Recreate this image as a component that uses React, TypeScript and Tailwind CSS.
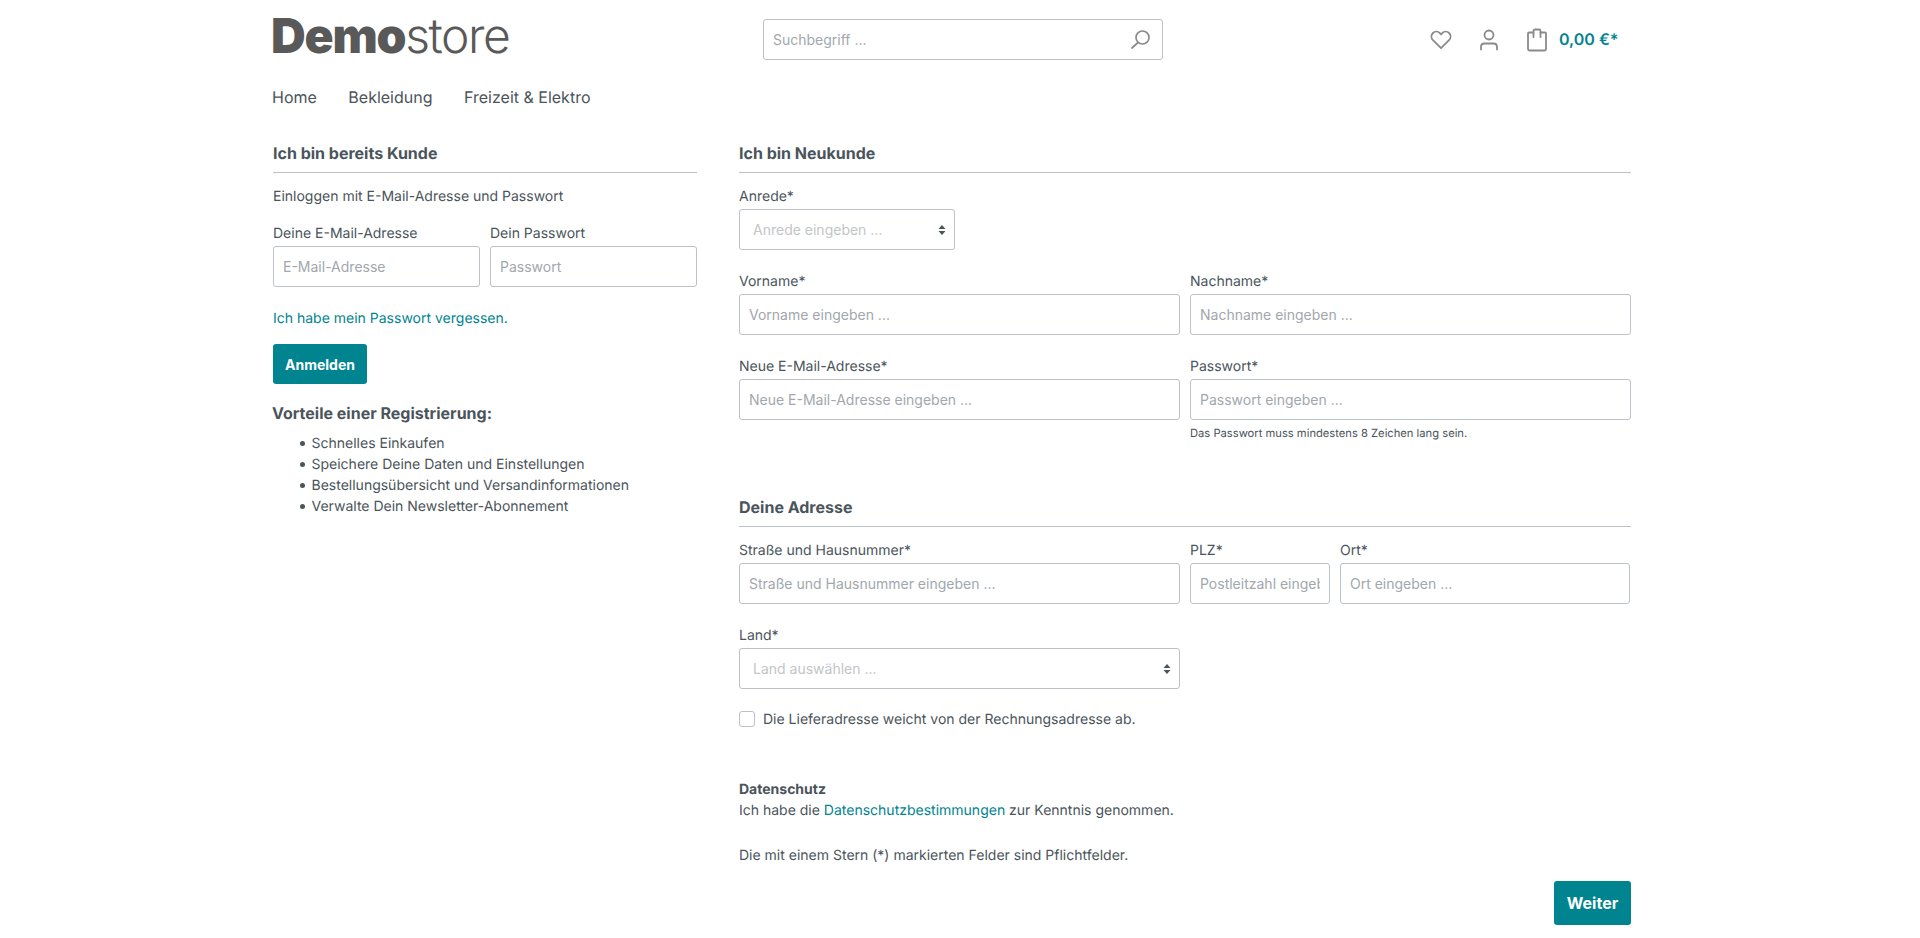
import React from "react";

const inputClass =
  "block w-full h-[41px] px-[9px] bg-white border border-[#bcc1c7] rounded-[3px] text-sm text-[#4a545b] placeholder:text-[#a2a7ad] outline-none";

const Field = ({ label, placeholder, className = "" }: { label: string; placeholder: string; className?: string }) => (
  <div className={className}>
    <label className="block mb-[2px] text-sm leading-[21px]">{label}</label>
    <input className={inputClass} placeholder={placeholder} />
  </div>
);

const SelectField = ({ label, placeholder, className = "" }: { label: string; placeholder: string; className?: string }) => (
  <div className={className}>
    <label className="block mb-[2px] text-sm leading-[21px]">{label}</label>
    <div className="relative">
      <select
        defaultValue=""
        className="block w-full h-[41px] pl-[13px] pr-6 appearance-none bg-white border border-[#bcc1c7] rounded-[3px] text-sm text-[#c3c5c8] outline-none"
      >
        <option value="" disabled>
          {placeholder}
        </option>
      </select>
      <svg className="absolute right-[9px] top-[15px] pointer-events-none" width="8" height="12" viewBox="0 0 8 12" fill="#4a545b">
        <path d="M4 1 7.5 5H.5zM4 11 .5 7h7z" />
      </svg>
    </div>
  </div>
);

const Heading = ({ children }: { children: React.ReactNode }) => (
  <h2 className="pb-[7px] border-b border-[#bcc1c7] text-base leading-6 font-bold">{children}</h2>
);

const benefits = [
  "Schnelles Einkaufen",
  "Speichere Deine Daten und Einstellungen",
  "Bestellungsübersicht und Versandinformationen",
  "Verwalte Dein Newsletter-Abonnement",
];

export default function App() {
  return (
    <div className="h-[938px] overflow-hidden bg-white text-[#4a545b] text-sm leading-[21px] font-['Inter',sans-serif] antialiased [text-rendering:geometricPrecision]">
      <header className="mx-auto w-[1400px] pl-3">
        <div className="flex items-center h-[80px]">
          <a className="w-[491px] -ml-[1px] mr-[1px] text-[#595959] text-[48px] leading-none pb-[9px]">
            <span className="font-black tracking-[-0.025em]">Demo</span>
            <span className="font-light tracking-[-0.03em]">store</span>
          </a>
          <div className="relative w-[400px] -mt-[1px]">
            <input className={inputClass} placeholder="Suchbegriff ..." />
            <svg className="absolute right-[12px] top-[10px]" width="21" height="21" viewBox="0 0 21 21" fill="none" stroke="#8a8a8a" strokeWidth="1.7" strokeLinecap="round">
              <circle cx="12.5" cy="8.500" r="6.500" />
              <path d="M8 13.500 2 19" />
            </svg>
          </div>
          <div className="flex items-center ml-[267px]">
            <svg width="22" height="20" viewBox="0 0 22 20" fill="none" stroke="#8a8a8a" strokeWidth="1.800" strokeLinejoin="round">
              <path d="M11 18.200 3 10.200C.9 8 1 4.900 2.900 3c2-1.900 5-1.800 6.900.1L11 4.400l1.200-1.300c1.900-1.900 4.900-2 6.900-.1 1.900 1.900 2 5-.1 7.200z" />
            </svg>
            <svg className="ml-[27px]" width="20" height="22" viewBox="0 0 20 22" fill="none" stroke="#8a8a8a" strokeWidth="1.800" strokeLinecap="round">
              <circle cx="10" cy="6" r="4.500" />
              <path d="M2 20.500V18c0-2 1.500-3.500 3.500-3.500h9c2 0 3.500 1.500 3.500 3.500v2.500" />
            </svg>
            <svg className="ml-[27px]" width="22" height="24" viewBox="0 0 22 24" fill="none" stroke="#8a8a8a" strokeWidth="1.800" strokeLinejoin="round" strokeLinecap="round">
              <path d="M7.500 4.500H3a1 1 0 0 0-1 1V21a1.500 1.500 0 0 0 1.500 1.500h15A1.500 1.500 0 0 0 20 21V5.500a1 1 0 0 0-1-1h-4.500" />
              <path d="M7.500 9V3a1.500 1.500 0 0 1 1.500-1.500h4A1.500 1.500 0 0 1 14.500 3v6" />
            </svg>
            <span className="ml-[11px] pb-[2px] text-base font-semibold text-[#008490]">0,00 €*</span>
          </div>
        </div>
        <nav className="flex gap-[31.5px] h-[34px] items-center text-base text-[#4a545b]">
          <a>Home</a>
          <a>Bekleidung</a>
          <a>Freizeit &amp; Elektro</a>
        </nav>
      </header>

      <main className="mx-auto w-[1400px] pl-[13px] pt-[27px] flex gap-[42px]">
        <section className="w-[424px] shrink-0">
          <Heading>Ich bin bereits Kunde</Heading>
          <p className="mt-[13px]">Einloggen mit E-Mail-Adresse und Passwort</p>
          <div className="mt-[16px] grid grid-cols-2 gap-x-[10px]">
            <Field label="Deine E-Mail-Adresse" placeholder="E-Mail-Adresse" />
            <Field label="Dein Passwort" placeholder="Passwort" />
          </div>
          <a className="block mt-[21px] text-[#008490]">Ich habe mein Passwort vergessen.</a>
          <button className="block mt-[15px] w-[94px] h-[40px] pt-[1px] rounded-[3px] bg-[#008490] text-white text-sm font-bold">Anmelden</button>
          <h3 className="mt-[17px] -ml-[1px] text-base leading-6 font-bold">Vorteile einer Registrierung:</h3>
          <ul className="mt-[8px] pl-[38.5px] list-none">
            {benefits.map((item) => (
              <li
                key={item}
                className="relative before:absolute before:-left-[12px] before:top-[8px] before:w-[5px] before:h-[5px] before:rounded-full before:bg-[#4a545b]"
              >
                {item}
              </li>
            ))}
          </ul>
        </section>

        <section className="w-[892px] shrink-0">
          <Heading>Ich bin Neukunde</Heading>
          <div className="mt-[13px] flex flex-col gap-[21px]">
            <SelectField className="w-[216px]" label="Anrede*" placeholder="Anrede eingeben ..." />
            <div className="grid grid-cols-2 gap-x-[10px]">
              <Field label="Vorname*" placeholder="Vorname eingeben ..." />
              <Field label="Nachname*" placeholder="Nachname eingeben ..." />
            </div>
            <div className="grid grid-cols-2 gap-x-[10px]">
              <Field label="Neue E-Mail-Adresse*" placeholder="Neue E-Mail-Adresse eingeben ..." />
              <div>
                <Field label="Passwort*" placeholder="Passwort eingeben ..." />
                <p className="mt-[4px] text-[11.2px] leading-[18px]">Das Passwort muss mindestens 8 Zeichen lang sein.</p>
              </div>
            </div>
          </div>

          <div className="mt-[53px]">
            <Heading>Deine Adresse</Heading>
          </div>
          <div className="mt-[13px] flex flex-col gap-[21px]">
            <div className="grid grid-cols-[441px_140px_290px] gap-x-[10px]">
              <Field label="Straße und Hausnummer*" placeholder="Straße und Hausnummer eingeben ..." />
              <Field label="PLZ*" placeholder="Postleitzahl eingeben ..." />
              <Field label="Ort*" placeholder="Ort eingeben ..." />
            </div>
            <SelectField className="w-[441px]" label="Land*" placeholder="Land auswählen ..." />
          </div>
          <label className="mt-[22px] flex items-center h-[16px]">
            <input type="checkbox" className="appearance-none w-4 h-4 rounded-[3px] border border-[#bcc1c7] bg-white" />
            <span className="ml-2">Die Lieferadresse weicht von der Rechnungsadresse ab.</span>
          </label>

          <p className="mt-[52px] font-bold">Datenschutz</p>
          <p>
            Ich habe die <a className="text-[#008490]">Datenschutzbestimmungen</a> zur Kenntnis genommen.
          </p>
          <p className="mt-[24px]">Die mit einem Stern (*) markierten Felder sind Pflichtfelder.</p>
          <div className="mt-[15px] flex justify-end">
            <button className="w-[77px] h-[44px] rounded-[3px] bg-[#008490] text-white text-base font-bold">Weiter</button>
          </div>
        </section>
      </main>
    </div>
  );
}
